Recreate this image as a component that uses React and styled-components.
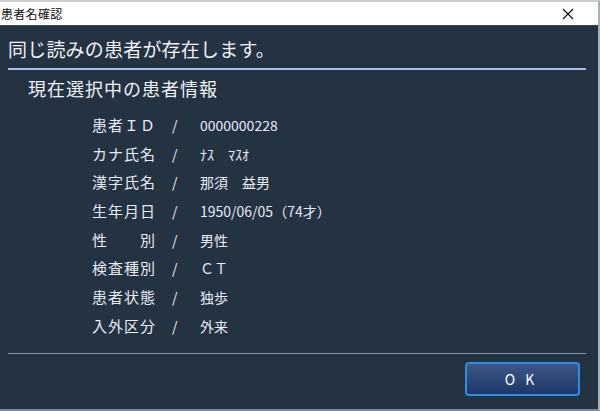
import styled, { createGlobalStyle } from "styled-components";

const GlobalStyle = createGlobalStyle`
  html, body {
    margin: 0;
    padding: 0;
    background: #ffffff;
  }
  body {
    font-family: "Noto Sans CJK JP", "Noto Sans", sans-serif;
  }
`;

const Window = styled.div`
  width: 600px;
  height: 411px;
  display: flex;
  flex-direction: column;
  box-sizing: border-box;
  border-top: 2px solid #cfcfcf;
  border-right: 2px solid #a9b0b8;
  border-bottom: 2px solid #7d8a98;
  background: #243342;
  overflow: hidden;
`;

const TitleBar = styled.div`
  height: 23px;
  flex-shrink: 0;
  background: #ffffff;
  display: flex;
  align-items: center;
  justify-content: space-between;
  padding: 0 0 0 1px;
  border-bottom: 1px solid #3a4653;
`;

const TitleText = styled.span`
  font-size: 12px;
  color: #111;
  letter-spacing: 0.3px;
`;

const CloseButton = styled.div`
  width: 46px;
  height: 23px;
  display: flex;
  align-items: center;
  justify-content: center;
  margin-right: 7px;
`;

const Body = styled.div`
  flex: 1;
  display: flex;
  flex-direction: column;
  padding: 10px 12px 0 8px;
`;

const Heading = styled.div`
  font-size: 19px;
  color: #eef2f8;
  line-height: 26px;
  letter-spacing: 0.2px;
`;

const Rule = styled.div`
  height: ${(p) => p.$size}px;
  background: ${(p) => p.$color};
  margin: ${(p) => p.$margin};
`;

const SubHeading = styled.div`
  font-size: 18px;
  color: #eef2f8;
  line-height: 22px;
  padding-left: 20px;
  letter-spacing: 1px;
`;

const InfoList = styled.div`
  display: flex;
  flex-direction: column;
  padding: 16px 0 0 84px;
  gap: 8.7px;
`;

const Row = styled.div`
  display: grid;
  grid-template-columns: 80px 28px auto;
  font-size: 15px;
  line-height: 20px;
  color: #e6ebf4;
`;

const Label = styled.span`
  display: flex;
  justify-content: space-between;
  width: 64px;
  letter-spacing: 1px;
  white-space: nowrap;
`;

const Slash = styled.span`
  font-size: 14px;
`;

const Value = styled.span`
  white-space: pre;
  font-size: 14px;
`;

const Footer = styled.div`
  display: flex;
  justify-content: flex-end;
  padding: 8px 6px 0 0;
`;

const OkButton = styled.button`
  width: 115px;
  height: 34px;
  box-sizing: border-box;
  border: 2px solid #2e8ce6;
  border-radius: 4px;
  background: linear-gradient(#3d5885, #1d376a);
  color: #ffffff;
  font-family: "Noto Sans CJK JP", sans-serif;
  font-size: 14px;
  letter-spacing: 10px;
  padding-left: 10px;
  cursor: pointer;
`;

const rows = [
  { label: ["患者ＩＤ"], value: "0000000228" },
  { label: ["カナ氏名"], value: "ﾅｽ　ﾏｽｵ" },
  { label: ["漢字氏名"], value: "那須　益男" },
  { label: ["生年月日"], value: "1950/06/05（74才）" },
  { label: ["性", "別"], value: "男性" },
  { label: ["検査種別"], value: "ＣＴ" },
  { label: ["患者状態"], value: "独歩" },
  { label: ["入外区分"], value: "外来" },
];

export default function App() {
  return (
    <>
      <GlobalStyle />
      <Window>
        <TitleBar>
          <TitleText>患者名確認</TitleText>
          <CloseButton>
            <svg width="12" height="12" viewBox="0 0 12 12">
              <path d="M1 1L11 11M11 1L1 11" stroke="#111" strokeWidth="1.2" />
            </svg>
          </CloseButton>
        </TitleBar>
        <Body>
          <Heading>同じ読みの患者が存在します。</Heading>
          <Rule $size={2} $color="#a9c1ea" $margin="6px 0 7px 0" />
          <SubHeading>現在選択中の患者情報</SubHeading>
          <InfoList>
            {rows.map((r) => (
              <Row key={r.value}>
                <Label>
                  {r.label.map((l) => (
                    <span key={l}>{l}</span>
                  ))}
                </Label>
                <Slash>/</Slash>
                <Value>{r.value}</Value>
              </Row>
            ))}
          </InfoList>
          <Rule $size={1} $color="#8293a8" $margin="auto 0 0 0" />
          <Footer>
            <OkButton>OK</OkButton>
          </Footer>
          <div style={{ height: 13 }} />
        </Body>
      </Window>
    </>
  );
}
